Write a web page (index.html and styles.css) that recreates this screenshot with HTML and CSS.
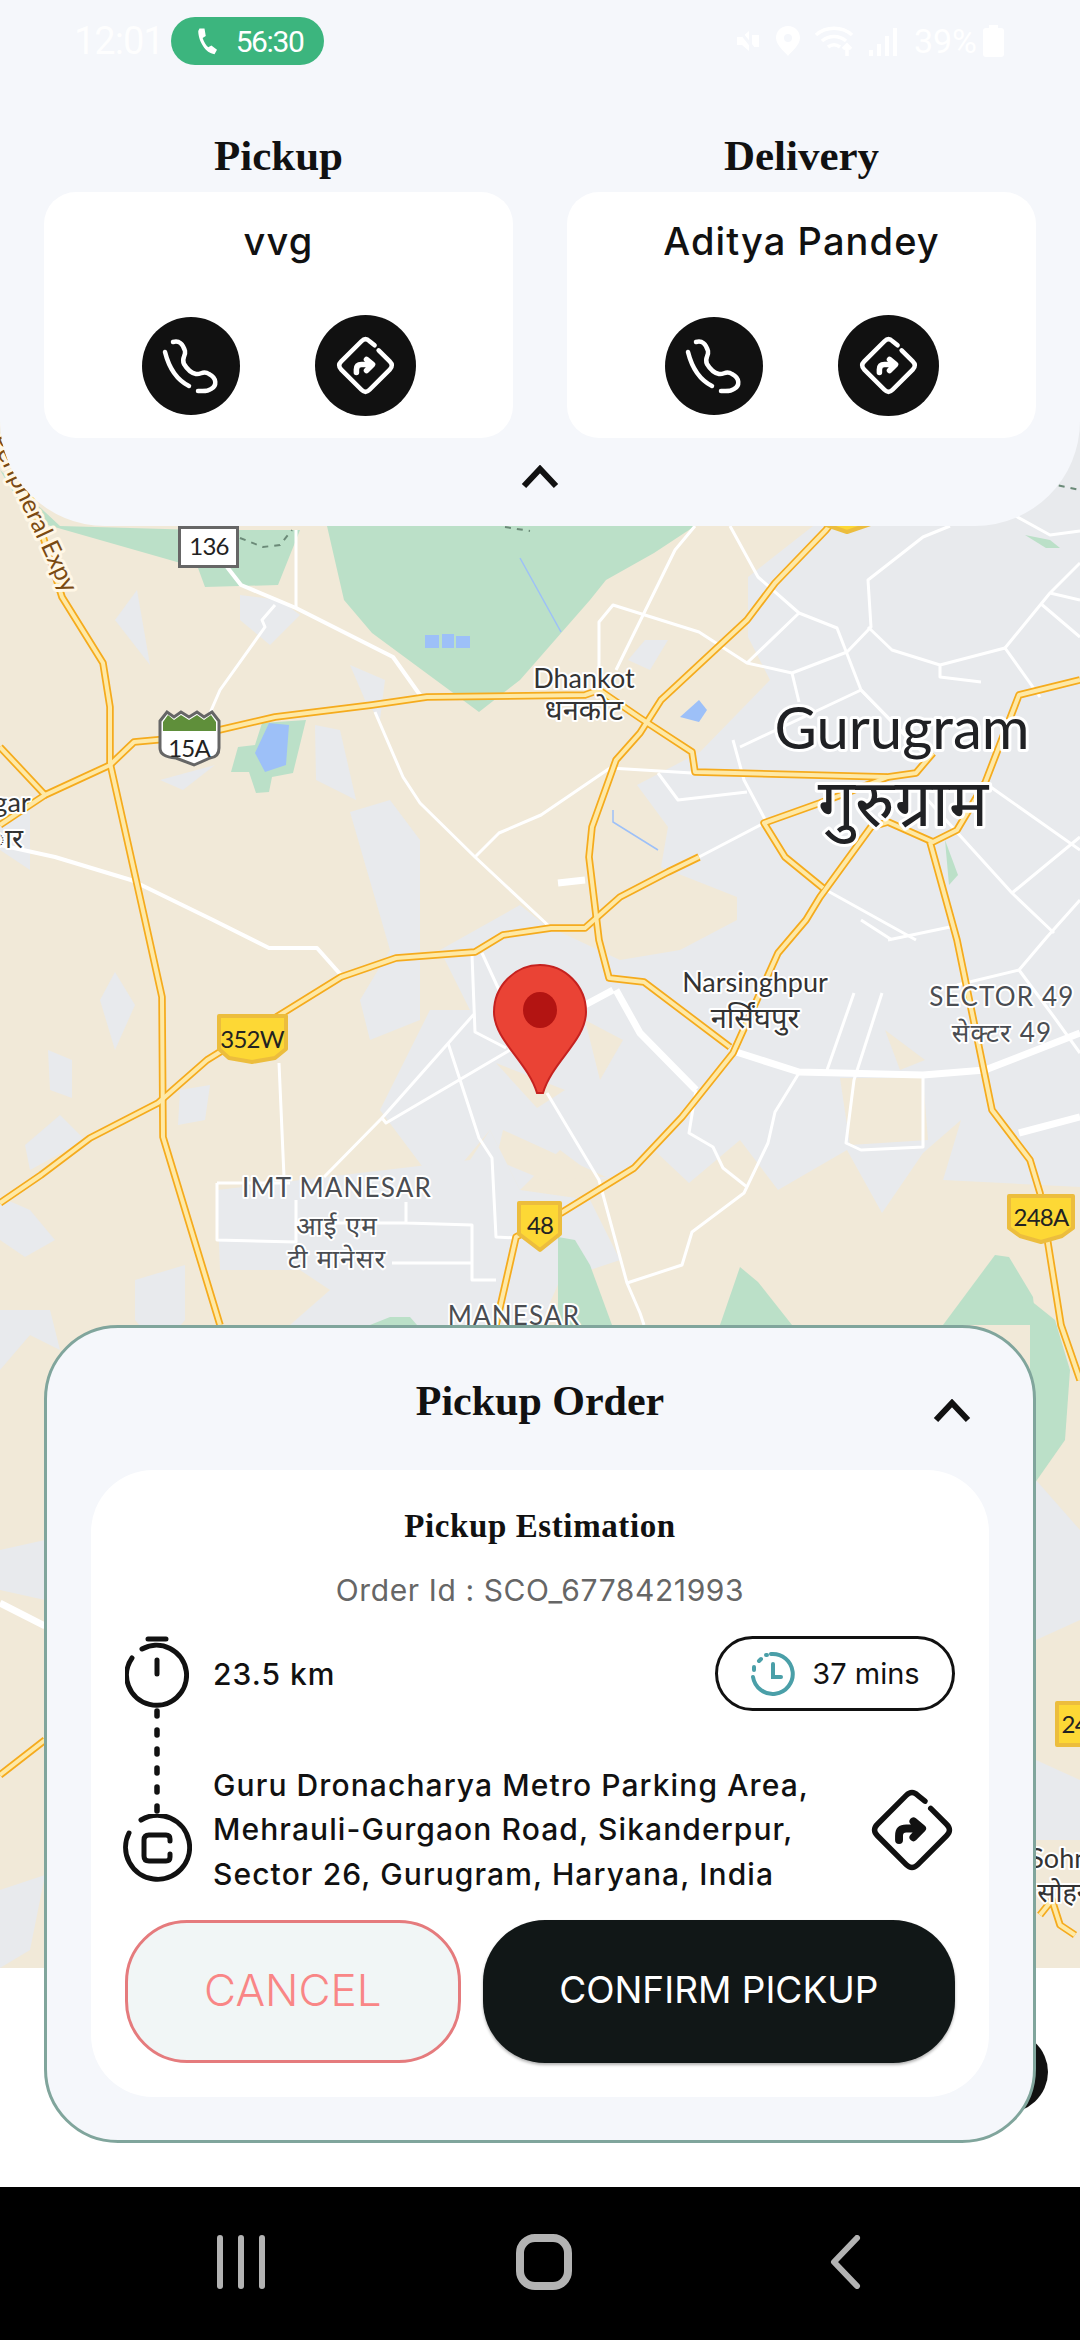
FILE: index.html
```html
<!DOCTYPE html>
<html lang="en">
<head>
  <meta charset="UTF-8" />
  <meta name="viewport" content="width=device-width, initial-scale=1.0" />
  <title>Pickup Order</title>
  <link rel="stylesheet" href="styles.css">
</head>
<body>
  <svg class="icon-defs" width="0" height="0">
    <symbol id="i-call" viewBox="-49 -49 98 98">
      <path d="M-26 -14C-22 2 -14 14 -2 20" />
      <path d="M-18 -24C-12 -26 -8 -22 -6 -15C-5 -10 -10 -8 -7 -2C-4 3 0 7 5 8C10 9 12 4 18 8C26 12 26 20 20 23C16 26 12 25 7 25" />
    </symbol>
    <symbol id="i-direct" viewBox="-50 -50 100 100">
      <path d="M13 -15L24 -4Q28 0 24 4L4 24Q0 28 -4 24L-24 4Q-28 0 -24 -4L-4 -24Q0 -28 4 -24L9 -20" />
      <path class="direct-arrow" d="M-9 7V4Q-9 -1 -4 -1H6M1 -6L7 -1L1 5" />
    </symbol>
    <symbol id="i-chevron" viewBox="0 0 38 24">
      <path d="M3 21L19 4L35 21" />
    </symbol>
  </svg>

  <div class="screen">
    <!-- map sits behind both panels -->
    <svg class="map" viewBox="0 0 1080 1968" width="1080" height="1968">
      <defs>
        <g id="highways">
          <path d="M0 400L62 597L103 663L110 707L110 763L145 920L162 997L163 1137L220 1325" />
          <path d="M0 747L45 795L110 765L134 742L189 737L275 717L372 705L427 697L585 695L599 690L640 718L692 752L695 772L888 777L916 773L933 753" />
          <path d="M45 795L0 825" />
          <path d="M850 500L826 530L775 583L747 620L661 700L640 733L616 760L592 827L589 857L599 940L609 978L644 982L730 1047" />
          <path d="M496 1325L516 1237L561 1213L634 1168L682 1117L733 1053L778 953L806 920L820 897L871 827L888 822L933 842L957 830L985 783L1019 695L1080 680" />
          <path d="M888 777L820 803L764 823L785 857L823 888" />
          <path d="M0 1203L41 1175L90 1138L158 1103L207 1060L341 977L396 958L475 952L503 935L551 928L585 928L620 897L668 872L699 857" />
          <path d="M930 842L957 940L992 1110L1030 1160L1040 1193L1061 1325L1080 1380" />
          <path d="M0 1775L45 1740" />
          <path d="M1040 1915L1052 1900L1060 1925L1075 1935" />
        </g>
      </defs>

      <rect class="land" width="1080" height="1968" />

      <polygon class="urban" points="813,526 850,400 1080,400 1080,1187 943,1180 961,1120 923,1153 882,1213 847,1150 778,1190 740,1140 689,1183 654,1150 640,1170 620,1175 600,1180 560,1150 520,1190 490,1130 440,1190 380,1110 430,1010 470,1010 440,950 520,905 545,925 620,960 680,950 737,920 737,897 661,867 668,827 637,785 700,752 770,680 748,637 748,577" />
      <polygon class="land" points="585,1020 623,1040 600,1080" />
      <polygon class="land" points="496,1063 565,1090 537,1108" />
      <polygon class="land" points="503,1130 606,1177 544,1180 496,1160" />
      <polygon class="land" points="840,1078 923,1078 928,1140 850,1145" />
      <polygon class="land" points="885,1030 925,1060 900,1070" />
      <polygon class="urban" points="217,1190 470,1160 490,1130 520,1190 590,1200 620,1260 560,1280 540,1325 290,1325 330,1290 300,1270 220,1270" />
      <polygon class="urban" points="350,812 390,800 420,840 420,1020 370,1040 360,1000 390,950" />
      <polygon class="urban" points="240,595 280,600 300,615 270,645 240,620" />
      <polygon class="urban" points="137,590 150,665 115,620" />
      <polygon class="urban" points="350,665 385,680 380,720 365,700" />
      <polygon class="urban" points="315,725 340,730 356,800 316,780" />
      <polygon class="urban" points="160,780 215,765 183,790" />
      <polygon class="urban" points="645,640 668,640 650,670 628,660" />
      <polygon class="urban" points="115,972 135,1005 115,1050 100,1000" />
      <polygon class="urban" points="48,1050 72,1060 72,1098 50,1090" />
      <polygon class="urban" points="180,1090 210,1085 205,1120 178,1125" />
      <polygon class="urban" points="60,1115 85,1140 30,1170 25,1145" />
      <polygon class="urban" points="135,1280 185,1265 185,1320 160,1350 135,1320" />
      <polygon class="urban" points="0,1310 50,1310 60,1350 30,1335 0,1370" />
      <polygon class="urban" points="0,800 30,800 30,870 0,850" />
      <polygon class="urban" points="0,1197 30,1210 55,1240 25,1257 0,1240" />
      <polygon class="urban" points="0,1550 45,1540 45,1600 0,1590" />
      <polygon class="urban" points="0,1890 45,1875 30,1950 0,1968" />
      <polygon class="urban" points="1036,1480 1080,1530 1080,1620 1036,1640" />
      <polygon class="urban" points="1036,1760 1080,1780 1080,1840 1036,1840" />

      <polygon class="park" points="0,470 60,526 200,530 300,530 278,585 205,587 198,568 100,540 30,520" />
      <polygon class="park" points="327,526 344,600 372,633 479,712 520,680 590,600 606,580 654,553 695,526" />
      <polygon class="park" points="262,723 306,720 293,773 272,777 269,792 256,793 249,772 231,772 238,747 255,745" />
      <polygon class="park" points="558,1237 575,1240 590,1265 612,1325 558,1325" />
      <polygon class="park" points="740,1267 758,1282 792,1325 720,1325" />
      <polygon class="park" points="995,1255 1009,1257 1033,1297 1036,1325 943,1325" />
      <polygon class="park" points="370,1325 390,1317 410,1317 417,1325" />
      <polygon class="park" points="1030,1300 1055,1320 1070,1370 1065,1440 1030,1490" />
      <polygon class="park" points="1025,535 1050,540 1060,548 1046,548" />
      <polygon class="park" points="945,840 958,875 949,885" />

      <polygon class="water" points="269,723 289,725 286,765 265,772 255,753" />
      <polygon class="water" points="425,635 439,635 439,648 425,648" />
      <polygon class="water" points="442,634 454,634 454,648 442,648" />
      <polygon class="water" points="456,636 470,636 470,648 456,648" />
      <polygon class="water" points="699,700 707,710 699,722 680,717" />
      <path class="stream" d="M520 558L561 632" />
      <path class="stream" d="M613 810L613 822L658 850" />

      <g class="roads">
        <path d="M227 567L241 585L296 608L393 657L420 695" />
        <path d="M0 845L55 857L131 880L213 920L269 948L317 948L341 975" />
        <path class="thin" d="M296 530L296 608M275 605L262 620L265 627L220 690L210 713" />
        <path class="thin" d="M375 712L403 777L420 803L475 857L551 928M475 857L499 833L541 815L610 768L692 773" />
        <path class="thin" d="M658 773L678 800L747 792M699 857L764 823" />
        <path class="thin" d="M599 690L599 622L613 605L699 632L747 663L792 673L847 652L871 627L868 580L923 537L950 526" />
        <path class="thin" d="M616 670L675 550L695 526M747 663L799 613L758 577L730 526" />
        <path class="thin" d="M799 613L837 628L861 690L916 747M792 673L799 702" />
        <path class="thin" d="M868 627L892 650L940 665L1005 648M940 665L940 677L981 682" />
        <path class="thin" d="M1005 648L1050 593L1080 600M1050 593L1080 563M1005 648L1040 697M1040 603L1080 637M1012 514L1050 535L1080 531" />
        <path class="thin" d="M733 740L744 780L785 857M740 747L861 690L930 760" />
        <path class="thin" d="M985 783L1080 850M916 787L1012 893L1054 933M826 890L916 940M1012 893L1080 837" />
        <path class="thin" d="M472 955L475 1032L506 1048M482 953L499 990M510 1050L386 1123L382 1118L475 1013M382 1118L324 1177" />
        <path class="thin" d="M448 1043L479 1138L492 1158L496 1237L516 1238M279 1063L284 1177" />
        <path class="thin" d="M217 1183L217 1240L296 1242L296 1200M406 1202L406 1223L472 1225L472 1280L496 1280M392 1263L472 1263M296 1223L406 1223M217 1183L290 1183" />
        <path class="thin" d="M547 1093L599 1180L627 1283L640 1313L644 1325M627 1283L682 1265L692 1232L744 1193L768 1143L775 1112L799 1073" />
        <path class="thin" d="M854 993L826 1073M882 993L854 1080L846 1143L861 1150L923 1147L923 1078" />
        <path class="thin" d="M1019 970L1047 937L1080 900M888 940L950 927M861 920L892 940M1019 970L957 985M1019 970L1054 1017L1080 1053" />
        <path class="thin" d="M696 1090L689 1133L713 1147L723 1168L747 1187" />
        <path class="wide" d="M730 1050L799 1072L923 1075L985 1070L1080 1033M613 990L585 1005M616 990L640 1033L696 1090M1019 1133L1080 1117M510 1050L560 1020" />
        <path class="wide" d="M0 1603L45 1626M558 883L585 880" />
      </g>

      <use href="#highways" class="hw-out" />
      <use href="#highways" class="hw-in" />

      <path class="park-trail" d="M240 538L263 547L280 545L292 530" />
      <path class="park-trail" d="M505 527L530 531M1047 483L1080 490" />

      <text class="lbl lbl-road" transform="translate(63 594) rotate(65)">Western Peripheral Expy</text>
      <text class="lbl lbl-mid" x="584" y="688">Dhankot</text>
      <text class="lbl lbl-hi" x="584" y="720">धनकोट</text>
      <text class="lbl lbl-city" x="902" y="749">Gurugram</text>
      <text class="lbl lbl-city lbl-city-hi" x="903" y="826">गुरुग्राम</text>
      <text class="lbl lbl-mid" x="12" y="812">gar</text>
      <text class="lbl lbl-mid" x="6" y="848">ार</text>
      <text class="lbl lbl-mid" x="755" y="992">Narsinghpur</text>
      <text class="lbl lbl-hi" x="755" y="1028">नर्सिंघपुर</text>
      <text class="lbl lbl-area" x="1002" y="1006">SECTOR 49</text>
      <text class="lbl lbl-area" x="1002" y="1042">सेक्टर 49</text>
      <text class="lbl lbl-area" x="337" y="1197">IMT MANESAR</text>
      <text class="lbl lbl-area" x="337" y="1235">आई एम</text>
      <text class="lbl lbl-area" x="337" y="1268">टी मानेसर</text>
      <text class="lbl lbl-area" x="514" y="1325">MANESAR</text>
      <text class="lbl lbl-mid" x="1066" y="1868">Sohna</text>
      <text class="lbl lbl-mid" x="1068" y="1902">सोहना</text>

      <rect class="shield-nh" x="179.500" y="527.500" width="58" height="39" />
      <text class="shield-txt" x="209" y="555">136</text>

      <path class="shield-sh" d="M160 721L167 712L174 717L181 712L189 717L197 712L204 717L212 712L219 721V748Q219 757 210 758L194 765L176 758Q160 757 160 748Z" />
      <path class="shield-green" d="M163 722L168 715L174 720L181 715L189 720L197 715L204 720L211 715L216 722V731H163Z" />
      <text class="shield-txt" x="189" y="757">15A</text>

      <path class="shield-yl" d="M812 500H882V520L847 532L812 520Z" />
      <path class="shield-yl" d="M219 1016H286V1049L275 1058L252 1062L229 1058L219 1049Z" />
      <text class="shield-txt" x="252" y="1048">352W</text>
      <path class="shield-yl" d="M519 1203H560V1234L540 1250L519 1234Z" />
      <text class="shield-txt" x="540" y="1234">48</text>
      <path class="shield-yl" d="M1009 1196H1073V1228L1062 1236L1041 1242L1020 1236L1009 1228Z" />
      <text class="shield-txt" x="1041" y="1226">248A</text>
      <path class="shield-yl" d="M1057 1703H1110V1745H1057Z" />
      <text class="shield-txt" x="1089" y="1733">248A</text>

      <path class="pin" d="M540 965C515 965 494 986 494 1012C494 1040 528 1062 537 1093H543C552 1062 586 1040 586 1012C586 986 565 965 540 965Z" />
      <ellipse class="pin-dot" cx="540" cy="1010" rx="17" ry="18" />
    </svg>

    <section class="top-panel">
      <div class="status-bar">
        <span class="clock">12:01</span>
        <span class="call-pill">
          <svg class="call-pill-icon" viewBox="0 0 24 24"><path d="M6 2L10 2L11 8L8.500 9.500C9.500 12.500 11 15 13 17L15.500 15.500L20 19L18 22.500C11 22 5 12 5 4Z" /></svg>
          56:30
        </span>
        <span class="status-right">
          <svg class="status-icon" width="28" height="28" viewBox="0 0 28 28"><path d="M3 10H8L15 4V24L8 18H3Z" /><path d="M18 8L25 8V20L18 20Z" /><path class="slash" d="M4 2L24 27" /></svg>
          <svg class="status-icon" width="26" height="30" viewBox="0 0 26 30"><path fill-rule="evenodd" d="M13 0C6 0 1 5 1 12C1 19 10 26 13 30C16 26 25 19 25 12C25 5 20 0 13 0ZM13 8A4 4 0 1 1 13 16A4 4 0 0 1 13 8Z" /></svg>
          <svg class="status-wifi" width="42" height="32" viewBox="0 0 42 32"><path d="M2 10C12 1 28 1 38 10M8 16C15 10 25 10 32 16M14 22C18 19 22 19 26 22" /><path d="M33 20V31M29 24L33 20L37 24" /></svg>
          <svg class="status-icon" width="28" height="30" viewBox="0 0 28 30"><rect x="0" y="24" width="4" height="6" /><rect x="8" y="18" width="4" height="12" /><rect x="16" y="10" width="4" height="20" /><rect x="24" y="2" width="4" height="28" /></svg>
          <span class="battery-pct">39%</span>
          <svg class="status-icon" width="21" height="32" viewBox="0 0 21 32"><rect x="6" y="0" width="9" height="4" /><rect x="0" y="3" width="21" height="29" rx="3" /></svg>
        </span>
      </div>

      <div class="contacts">
        <div class="contact">
          <h2 class="contact-title">Pickup</h2>
          <div class="contact-card">
            <div class="contact-name">vvg</div>
            <div class="contact-actions">
              <span class="round-btn"><svg class="line-icon light"><use href="#i-call" /></svg></span>
              <span class="round-btn big"><svg class="line-icon light"><use href="#i-direct" /></svg></span>
            </div>
          </div>
        </div>
        <div class="contact">
          <h2 class="contact-title">Delivery</h2>
          <div class="contact-card">
            <div class="contact-name">Aditya Pandey</div>
            <div class="contact-actions">
              <span class="round-btn"><svg class="line-icon light"><use href="#i-call" /></svg></span>
              <span class="round-btn big"><svg class="line-icon light"><use href="#i-direct" /></svg></span>
            </div>
          </div>
        </div>
      </div>

      <svg class="chevron top-chevron"><use href="#i-chevron" /></svg>
    </section>

    <section class="order-card">
      <span class="peek-fab"></span>
      <div class="order-head">
        <span></span>
        <h1 class="order-title">Pickup Order</h1>
        <svg class="chevron order-chevron"><use href="#i-chevron" /></svg>
      </div>

      <div class="order-body">
        <h3 class="est-title">Pickup Estimation</h3>
        <p class="order-id">Order Id : SCO_6778421993</p>

        <div class="route">
          <div class="route-rail">
            <svg class="rail-start" width="64" height="72" viewBox="-32 -38 64 72">
              <path d="M-9 -35H9M-15 -25A30 30 0 1 1 -25 -16M0 -14V0" />
            </svg>
            <svg class="rail-dots" width="6" height="106" viewBox="0 0 6 106"><path d="M3 3V103" /></svg>
            <svg class="rail-end" width="70" height="68" viewBox="-35 -34 70 68">
              <path d="M-16 -28A32 32 0 1 1 -28 -15M13 -7V-9Q13 -13 9 -13H-8Q-13 -13 -13 -8V8Q-13 13 -8 13H9Q13 13 13 9V6" />
            </svg>
          </div>

          <div class="route-info">
            <div class="route-top">
              <span class="distance">23.5 km</span>
              <span class="eta">
                <svg class="eta-icon" width="46" height="46" viewBox="-23 -23 46 46">
                  <path d="M-2 -20A20 20 0 1 1 -20 3" />
                  <path class="eta-dash" d="M-19 -4V-7M-14 -13L-12 -15M-7 -19L-6 -19" />
                  <path d="M0 -10V3H8" />
                </svg>
                37 mins
              </span>
            </div>
            <div class="route-bottom">
              <p class="address">Guru Dronacharya Metro Parking Area, Mehrauli-Gurgaon Road, Sikanderpur, Sector 26, Gurugram, Haryana, India</p>
              <svg class="line-icon dark"><use href="#i-direct" /></svg>
            </div>
          </div>
        </div>

        <div class="order-actions">
          <button class="btn btn-cancel">CANCEL</button>
          <button class="btn btn-confirm">CONFIRM PICKUP</button>
        </div>
      </div>
    </section>

    <nav class="nav-bar">
      <svg class="nav-icon" width="48" height="54" viewBox="0 0 48 54"><path d="M3 3V51M24 3V51M45 3V51" /></svg>
      <svg class="nav-icon nav-home" width="56" height="56" viewBox="0 0 56 56"><rect x="4" y="4" width="48" height="48" rx="15" /></svg>
      <svg class="nav-icon nav-back" width="32" height="54" viewBox="0 0 32 54"><path d="M28 3L5 27L28 51" /></svg>
    </nav>
  </div>
</body>
</html>
```

FILE: styles.css
```css
* {
  box-sizing: border-box;
}
body {
  margin: 0;
  background: #fff;
  font-family: 'Inter', sans-serif;
  color: #111;
}
h1, h2, h3, p {
  margin: 0;
  font-weight: normal;
}
.icon-defs {
  position: absolute;
}
.direct-arrow {
  stroke-width: 5.500px;
}
.screen {
  position: relative;
  width: 1080px;
  height: 2340px;
  overflow: hidden;
  display: flex;
  flex-direction: column;
}

/* map */
.map {
  position: absolute;
  left: 0;
  top: 0;
}
.land { fill: #f1e9d8; }
.urban { fill: #e8eaed; }
.park { fill: #bbe0c8; }
.water { fill: #9dc0f8; }
.stream {
  fill: none;
  stroke: #9dc0f8;
  stroke-width: 1.500;
}
.roads path {
  fill: none;
  stroke: #fff;
  stroke-width: 4;
  stroke-linejoin: round;
}
.roads path.thin { stroke-width: 3; }
.roads path.wide { stroke-width: 7; }
.hw-out, .hw-in {
  fill: none;
  stroke-linejoin: round;
}
.hw-out {
  stroke: #f5ab1d;
  stroke-width: 7.500;
}
.hw-in {
  stroke: #fee9a6;
  stroke-width: 4;
}
.park-trail {
  fill: none;
  stroke: #6b8a78;
  stroke-width: 2;
  stroke-dasharray: 6 6;
}
.lbl {
  font-family: 'Lato', 'Noto Sans', sans-serif;
  text-anchor: middle;
  fill: #333;
  stroke: #fff;
  stroke-width: 4px;
  paint-order: stroke;
  stroke-linejoin: round;
}
.lbl-road {
  font-size: 25px;
  fill: #7a4a12;
  text-anchor: end;
  stroke: #fff7e6;
  stroke-width: 6px;
}
.lbl-mid { font-size: 27px; }
.lbl-hi { font-size: 29px; }
.lbl-city {
  font-size: 58px;
  fill: #202124;
  stroke-width: 6px;
}
.lbl-city-hi { font-size: 66px; }
.lbl-area {
  font-size: 26px;
  letter-spacing: 1.200px;
  fill: #4a4d52;
}
.shield-nh {
  fill: #fff;
  stroke: #666;
  stroke-width: 3;
}
.shield-txt {
  font-family: 'Lato', sans-serif;
  font-size: 24px;
  letter-spacing: -0.800px;
  text-anchor: middle;
  fill: #222;
}
.shield-sh {
  fill: #fff;
  stroke: #666;
  stroke-width: 3;
}
.shield-green { fill: #5f8f3a; }
.shield-yl {
  fill: #fdd835;
  stroke: #ecbd3d;
  stroke-width: 4;
  stroke-linejoin: round;
}
.pin {
  fill: #ea4335;
  stroke: #c5221f;
  stroke-width: 2;
}
.pin-dot { fill: #b31412; }

/* top panel */
.top-panel {
  position: relative;
  height: 526px;
  background: #f5f7fb;
  border-radius: 0 0 105px 105px;
  display: flex;
  flex-direction: column;
  align-items: center;
}
.status-bar {
  width: 100%;
  height: 82px;
  padding: 17px 76px 0 74px;
  display: flex;
  align-items: flex-start;
  color: #fff;
}
.clock {
  width: 97px;
  height: 48px;
  font-family: 'Roboto', sans-serif;
  font-size: 38px;
  letter-spacing: -1px;
  line-height: 48px;
  opacity: 0.9;
}
.call-pill {
  width: 153px;
  height: 48px;
  border-radius: 24px;
  background: #3cb57e;
  display: flex;
  align-items: center;
  justify-content: center;
  gap: 14px;
  font-family: 'Roboto', sans-serif;
  font-size: 30px;
  letter-spacing: -1.400px;
}
.call-pill-icon {
  width: 30px;
  height: 30px;
  fill: #fff;
}
.status-right {
  margin-left: auto;
  height: 48px;
  display: flex;
  align-items: center;
  gap: 13px;
}
.status-icon {
  fill: #fff;
}
.status-icon .slash {
  stroke: #f5f7fb;
  stroke-width: 3;
}
.status-wifi {
  fill: none;
  stroke: #fff;
  stroke-width: 3.500;
}
.battery-pct {
  font-family: 'Roboto', sans-serif;
  font-size: 34px;
  margin-left: 4px;
  margin-right: -7px;
}
.contacts {
  width: 100%;
  padding: 0 44px;
  display: grid;
  grid-template-columns: 469px 469px;
  column-gap: 54px;
}
.contact-title {
  height: 50px;
  margin: 49px 0 11px;
  font-family: 'Liberation Serif', serif;
  font-weight: bold;
  font-size: 43px;
  line-height: 50px;
  text-align: center;
  color: #111;
}
.contact-card {
  height: 246px;
  padding-top: 26px;
  background: #fff;
  border-radius: 32px;
}
.contact-name {
  height: 46px;
  font-size: 38px;
  font-weight: 500;
  letter-spacing: 1.100px;
  line-height: 46px;
  text-align: center;
}
.contact-actions {
  margin-top: 51px;
  display: flex;
  align-items: center;
  justify-content: center;
  gap: 75px;
}
.round-btn {
  width: 98px;
  height: 98px;
  border-radius: 50%;
  background: #111;
  display: flex;
}
.round-btn.big {
  width: 101px;
  height: 101px;
}
.line-icon {
  width: 100%;
  height: 100%;
  fill: none;
  stroke-linecap: round;
  stroke-linejoin: round;
}
.line-icon.light {
  stroke: #fff;
  stroke-width: 4.500;
}
.line-icon.dark {
  flex: none;
  width: 144px;
  height: 144px;
  margin: 0 -29px 0 0;
  stroke: #111;
  stroke-width: 3.800;
}
.chevron {
  fill: none;
  stroke: #111;
  stroke-width: 6;
  stroke-linejoin: miter;
}
.top-chevron {
  width: 38px;
  height: 24px;
  margin-top: 27px;
}

/* order card */
.order-card {
  position: relative;
  margin: auto 44px 44px;
  padding: 48px 44px 43px;
  background: #f5f7fb;
  border: 3px solid #80a59c;
  border-radius: 74px;
}
.peek-fab {
  position: absolute;
  z-index: -1;
  right: -15px;
  bottom: 26px;
  width: 90px;
  height: 84px;
  border-radius: 50%;
  background: #111;
}
.order-head {
  height: 50px;
  display: grid;
  grid-template-columns: 1fr auto 1fr;
  align-items: center;
}
.order-title {
  font-family: 'Liberation Serif', serif;
  font-weight: bold;
  font-size: 42px;
  line-height: 50px;
}
.order-chevron {
  width: 38px;
  height: 24px;
  justify-self: end;
  margin: 19px 18px 0 0;
}
.order-body {
  margin-top: 44px;
  padding: 36px 34px 34px;
  background: #fff;
  border-radius: 62px;
}
.est-title {
  font-family: 'Liberation Serif', serif;
  font-weight: bold;
  font-size: 33px;
  letter-spacing: 0.600px;
  line-height: 40px;
  text-align: center;
}
.order-id {
  margin-top: 24px;
  font-size: 30px;
  letter-spacing: 0.600px;
  line-height: 40px;
  text-align: center;
  color: #666;
}
.route {
  margin-top: 26px;
  display: flex;
  gap: 24px;
}
.route-rail {
  flex: none;
  width: 64px;
  display: flex;
  flex-direction: column;
  align-items: center;
}
.route-rail svg {
  flex: none;
  fill: none;
  stroke: #111;
  stroke-width: 5;
  stroke-linecap: round;
}
.rail-dots path {
  stroke-width: 5.500;
  stroke-dasharray: 5 14;
}
.route-info {
  flex: 1;
}
.route-top {
  height: 75px;
  display: flex;
  align-items: center;
  justify-content: space-between;
}
.distance {
  font-size: 30px;
  font-weight: 500;
  letter-spacing: 1px;
}
.eta {
  width: 240px;
  height: 75px;
  border: 3px solid #111;
  border-radius: 38px;
  display: flex;
  align-items: center;
  justify-content: center;
  gap: 16px;
  font-size: 29px;
}
.eta-icon {
  fill: none;
  stroke: #4a9fa8;
  stroke-width: 4;
  stroke-linecap: round;
}
.route-bottom {
  margin-top: 52px;
  height: 133px;
  display: flex;
  align-items: center;
  justify-content: space-between;
}
.address {
  width: 620px;
  font-size: 30px;
  font-weight: 500;
  letter-spacing: 1.100px;
  line-height: 44.500px;
}
.order-actions {
  margin-top: 24px;
  display: flex;
  gap: 22px;
}
.btn {
  height: 143px;
  border-radius: 62px;
  font-family: 'Inter', sans-serif;
  padding: 0 0 4px;
}
.btn-cancel {
  width: 336px;
  background: #f1f6f6;
  border: 3px solid #e57b7d;
  color: #f98686;
  font-size: 44px;
  font-weight: 300;
}
.btn-confirm {
  width: 473px;
  background: #111717;
  border: none;
  color: #fff;
  font-size: 37px;
  box-shadow: 0 2px 3px rgba(0, 0, 0, 0.3);
}

/* nav */
.nav-bar {
  position: relative;
  flex: none;
  height: 153px;
  padding: 0 0 3px 217px;
  background: #000;
  display: flex;
  align-items: center;
}
.nav-icon {
  fill: none;
  stroke: #b3b3b3;
  stroke-width: 6;
  stroke-linecap: round;
  stroke-linejoin: round;
}
.nav-home {
  margin-left: 251px;
  stroke-width: 8;
}
.nav-back {
  margin-left: 257px;
}
```
